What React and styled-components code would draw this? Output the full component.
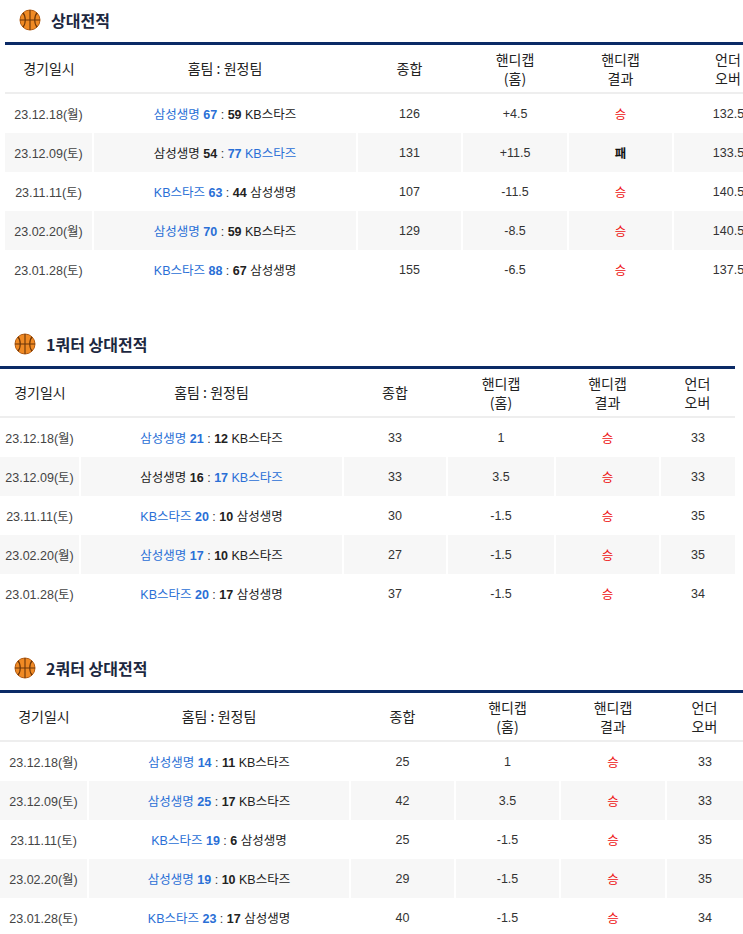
import React from 'react';
import styled, { createGlobalStyle } from 'styled-components';

const Global = createGlobalStyle`
  body { margin: 0; background: #fff; overflow: hidden; font-family: "Liberation Sans", "Noto Sans CJK KR", sans-serif; }
`;

const sections = [
  {
    title: '상대전적', left: 5, top: 8, cols: [88, 264, 105, 106, 105, 110],
    rows: [
      ['23.12.18(월)', ['삼성생명', 67, 59, 'KB스타즈', 'h'], 126, '+4.5', '승', '132.5'],
      ['23.12.09(토)', ['삼성생명', 54, 77, 'KB스타즈', 'a'], 131, '+11.5', '패', '133.5'],
      ['23.11.11(토)', ['KB스타즈', 63, 44, '삼성생명', 'h'], 107, '-11.5', '승', '140.5'],
      ['23.02.20(월)', ['삼성생명', 70, 59, 'KB스타즈', 'h'], 129, '-8.5', '승', '140.5'],
      ['23.01.28(토)', ['KB스타즈', 88, 67, '삼성생명', 'h'], 155, '-6.5', '승', '137.5'],
    ],
  },
  {
    title: '1쿼터 상대전적', left: 0, top: 43, cols: [80, 263, 104, 108, 105, 75],
    rows: [
      ['23.12.18(월)', ['삼성생명', 21, 12, 'KB스타즈', 'h'], 33, '1', '승', '33'],
      ['23.12.09(토)', ['삼성생명', 16, 17, 'KB스타즈', 'a'], 33, '3.5', '승', '33'],
      ['23.11.11(토)', ['KB스타즈', 20, 10, '삼성생명', 'h'], 30, '-1.5', '승', '35'],
      ['23.02.20(월)', ['삼성생명', 17, 10, 'KB스타즈', 'h'], 27, '-1.5', '승', '35'],
      ['23.01.28(토)', ['KB스타즈', 20, 17, '삼성생명', 'h'], 37, '-1.5', '승', '34'],
    ],
  },
  {
    title: '2쿼터 상대전적', left: 0, top: 43, cols: [88, 262, 105, 105, 106, 77],
    rows: [
      ['23.12.18(월)', ['삼성생명', 14, 11, 'KB스타즈', 'h'], 25, '1', '승', '33'],
      ['23.12.09(토)', ['삼성생명', 25, 17, 'KB스타즈', 'h'], 42, '3.5', '승', '33'],
      ['23.11.11(토)', ['KB스타즈', 19, 6, '삼성생명', 'h'], 25, '-1.5', '승', '35'],
      ['23.02.20(월)', ['삼성생명', 19, 10, 'KB스타즈', 'h'], 29, '-1.5', '승', '35'],
      ['23.01.28(토)', ['KB스타즈', 23, 17, '삼성생명', 'h'], 40, '-1.5', '승', '34'],
    ],
  },
];

const Section = styled.section`
  margin-top: ${({ $top }) => $top}px;
  margin-left: ${({ $left }) => $left}px;
`;

const Title = styled.h3`
  display: flex;
  align-items: center;
  gap: 10px;
  margin: 0 0 10px 14px;
  height: 24px;
  font-size: 16px;
  font-weight: 600;
  color: #1c2740;
  font-family: "Noto Sans CJK KR", sans-serif;
`;

const Table = styled.table`
  border-collapse: collapse;
  table-layout: fixed;
  border-top: 3px solid #0b2a66;
  font-size: 12.5px;
  color: #333;
`;

const Th = styled.th`
  height: 47px;
  padding: 0;
  font-weight: normal;
  font-size: 14px;
  line-height: 19px;
  color: #222;
  border-bottom: 2px solid #eee;
  text-align: center;
  font-family: "Noto Sans CJK KR", sans-serif;
`;

const Tr = styled.tr`
  background: ${({ $alt }) => ($alt ? '#f7f7f7' : '#fff')};
`;

const Td = styled.td`
  height: 39px;
  padding: 0;
  text-align: center;
  border-left: 2px solid #fff;
  &:first-child { border-left: 0; color: #444; }
`;

const Team = styled.span`
  color: ${({ $win }) => ($win ? '#2a6fd6' : '#222')};
  b { font-weight: bold; }
`;

const Result = styled.span`
  color: ${({ $win }) => ($win ? '#ee1111' : '#111')};
  font-weight: ${({ $win }) => ($win ? 'normal' : 'bold')};
`;

const Ball = () => (
  <svg width="22" height="22" viewBox="0 0 22 22">
    <circle cx="11" cy="11" r="10" fill="#f08a24" stroke="#b25a10" strokeWidth="1" />
    <path d="M1 11h20M11 1v20M4 4c3 3 3 11 0 14M18 4c-3 3-3 11 0 14" fill="none" stroke="#6b3508" strokeWidth="1.1" />
  </svg>
);

const Match = ({ m }) => {
  const [t1, s1, s2, t2, w] = m;
  return (
    <>
      <Team $win={w === 'h'}>{t1} <b>{s1}</b></Team> : <Team $win={w === 'a'}><b>{s2}</b> {t2}</Team>
    </>
  );
};

export default function App() {
  return (
    <>
      <Global />
      {sections.map((s) => (
        <Section key={s.title} $top={s.top} $left={s.left}>
          <Title><Ball />{s.title}</Title>
          <Table style={{ width: s.cols.reduce((a, b) => a + b, 0) }}>
            <colgroup>{s.cols.map((c, i) => <col key={i} style={{ width: c }} />)}</colgroup>
            <thead>
              <tr>
                <Th>경기일시</Th>
                <Th>홈팀 : 원정팀</Th>
                <Th>종합</Th>
                <Th>핸디캡<br />(홈)</Th>
                <Th>핸디캡<br />결과</Th>
                <Th>언더<br />오버</Th>
              </tr>
            </thead>
            <tbody>
              {s.rows.map((r, i) => (
                <Tr key={i} $alt={i % 2 === 1}>
                  <Td>{r[0]}</Td>
                  <Td><Match m={r[1]} /></Td>
                  <Td>{r[2]}</Td>
                  <Td>{r[3]}</Td>
                  <Td><Result $win={r[4] === '승'}>{r[4]}</Result></Td>
                  <Td>{r[5]}</Td>
                </Tr>
              ))}
            </tbody>
          </Table>
        </Section>
      ))}
    </>
  );
}
